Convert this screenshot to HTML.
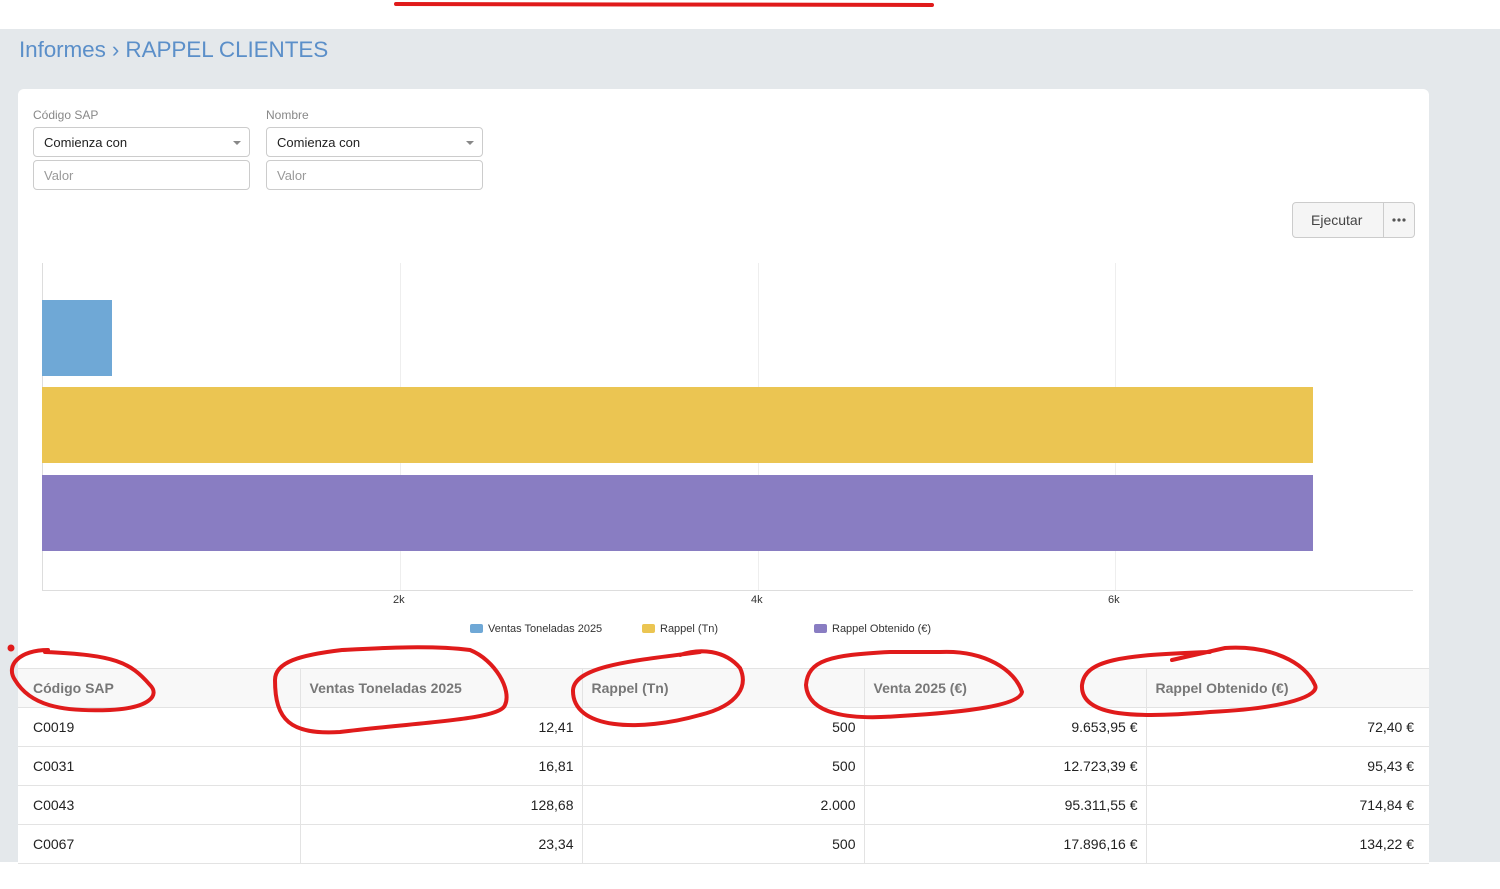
<!DOCTYPE html>
<html><head><meta charset="utf-8"><style>
*{box-sizing:border-box;margin:0;padding:0}
body{width:1500px;height:862px;overflow:hidden;background:#fff;font-family:"Liberation Sans",sans-serif;position:relative}
.bg{position:absolute;left:0;top:29px;width:1500px;height:833px;background:#e4e8eb}
.title{position:absolute;left:19px;top:37px;font-size:22.5px;color:#5b8fc9;letter-spacing:-0.1px}
.card{position:absolute;left:18px;top:89px;width:1411px;height:800px;background:#fff;border-radius:6px}
.lbl{position:absolute;font-size:12px;color:#888}
.inp{position:absolute;width:217px;height:30px;border:1px solid #ccc;border-radius:4px;font-size:13px;padding:7px 10px;color:#222}
.inp.ph{color:#999}
.caret{position:absolute;right:8px;top:13px;border-left:4px solid transparent;border-right:4px solid transparent;border-top:4px solid #888}
.btn{position:absolute;left:1292px;top:202px;width:123px;height:36px;border:1px solid #ccc;border-radius:4px;background:#f5f5f5;font-size:14px;color:#444}
.grid{position:absolute;top:263px;width:1px;height:327px;background:#eee}
.bar{position:absolute;left:42px}
.tick{position:absolute;top:594px;font-size:11px;color:#333}
.leg{position:absolute;top:623px;font-size:11px;color:#333}
.leg i{display:inline-block;width:13px;height:9px;border-radius:2px;margin-right:5px;vertical-align:-1px}
table{position:absolute;left:18px;top:668px;width:1411px;border-collapse:collapse;font-size:14px;color:#222}
td,th{height:39px;border:1px solid #e3e3e3;padding:0 8px 0 9px;text-align:right}
tr>*:first-child{text-align:left;border-left:none;padding-left:15px}
tr>*:last-child{border-right:none;padding-right:15px}
th{background:#f8f8f8;color:#777;text-align:left;font-weight:bold}
</style></head><body>
<div class="bg"></div>
<div class="title">Informes › RAPPEL CLIENTES</div>
<div class="card"></div>
<div class="lbl" style="left:33px;top:108px">Código SAP</div>
<div class="lbl" style="left:266px;top:108px">Nombre</div>
<div class="inp" style="left:33px;top:127px">Comienza con<span class="caret"></span></div>
<div class="inp" style="left:266px;top:127px">Comienza con<span class="caret"></span></div>
<div class="inp ph" style="left:33px;top:160px">Valor</div>
<div class="inp ph" style="left:266px;top:160px">Valor</div>
<div class="btn"><span style="position:absolute;left:18px;top:9px">Ejecutar</span><span style="position:absolute;left:90px;top:0;width:1px;height:34px;background:#ccc"></span>
<svg style="position:absolute;left:99px;top:15px" width="14" height="4"><circle cx="2" cy="2" r="1.6" fill="#555"/><circle cx="7" cy="2" r="1.6" fill="#555"/><circle cx="12" cy="2" r="1.6" fill="#555"/></svg></div>
<div class="grid" style="left:42px;background:#ddd"></div>
<div class="grid" style="left:400px"></div>
<div class="grid" style="left:758px"></div>
<div class="grid" style="left:1115px"></div>
<div style="position:absolute;left:42px;top:590px;width:1371px;height:1px;background:#ddd"></div>
<div class="bar" style="top:300px;width:70px;height:76px;background:#6fa8d6"></div>
<div class="bar" style="top:387px;width:1271px;height:76px;background:#ebc552"></div>
<div class="bar" style="top:475px;width:1271px;height:76px;background:#897dc2"></div>
<div class="tick" style="left:393px">2k</div>
<div class="tick" style="left:751px">4k</div>
<div class="tick" style="left:1108px">6k</div>
<div class="leg" style="left:470px"><i style="background:#6fa8d6"></i>Ventas Toneladas 2025</div>
<div class="leg" style="left:642px"><i style="background:#ebc552"></i>Rappel (Tn)</div>
<div class="leg" style="left:814px"><i style="background:#897dc2"></i>Rappel Obtenido (€)</div>
<table>
<tr><th style="width:282px">Código SAP</th><th style="width:282px">Ventas Toneladas 2025</th><th style="width:282px">Rappel (Tn)</th><th style="width:282px">Venta 2025 (€)</th><th>Rappel Obtenido (€)</th></tr>
<tr><td>C0019</td><td>12,41</td><td>500</td><td>9.653,95 €</td><td>72,40 €</td></tr>
<tr><td>C0031</td><td>16,81</td><td>500</td><td>12.723,39 €</td><td>95,43 €</td></tr>
<tr><td>C0043</td><td>128,68</td><td>2.000</td><td>95.311,55 €</td><td>714,84 €</td></tr>
<tr><td>C0067</td><td>23,34</td><td>500</td><td>17.896,16 €</td><td>134,22 €</td></tr>
</table>
<svg style="position:absolute;left:0;top:0" width="1500" height="862" fill="none" stroke="#e01b1b" stroke-width="4" stroke-linecap="round">
<path d="M396 4 L932 5"/>
<path d="M48 650 C20 650 5 665 15 680 C30 705 60 712 110 710 C150 708 160 695 150 685 C130 662 115 655 45 652"/>
<path d="M342 650 C300 655 275 662 275 680 C275 720 290 735 340 732 C420 722 500 720 505 705 C512 690 495 660 470 650 C430 645 380 648 342 650"/>
<path d="M700 652 C640 660 575 665 573 690 C572 730 640 732 700 715 C740 705 748 685 740 668 C725 650 700 648 680 655"/>
<path d="M890 652 C830 655 808 660 806 685 C808 715 850 720 900 716 C970 712 1020 705 1022 692 C1015 670 985 650 940 652 Z"/>
<path d="M1210 652 C1120 655 1085 660 1082 685 C1080 718 1140 718 1210 712 C1290 708 1320 695 1315 685 C1305 662 1270 645 1225 648 L1172 660"/>
<circle cx="11" cy="648" r="1.5" fill="#e01b1b"/>
</svg>
</body></html>
